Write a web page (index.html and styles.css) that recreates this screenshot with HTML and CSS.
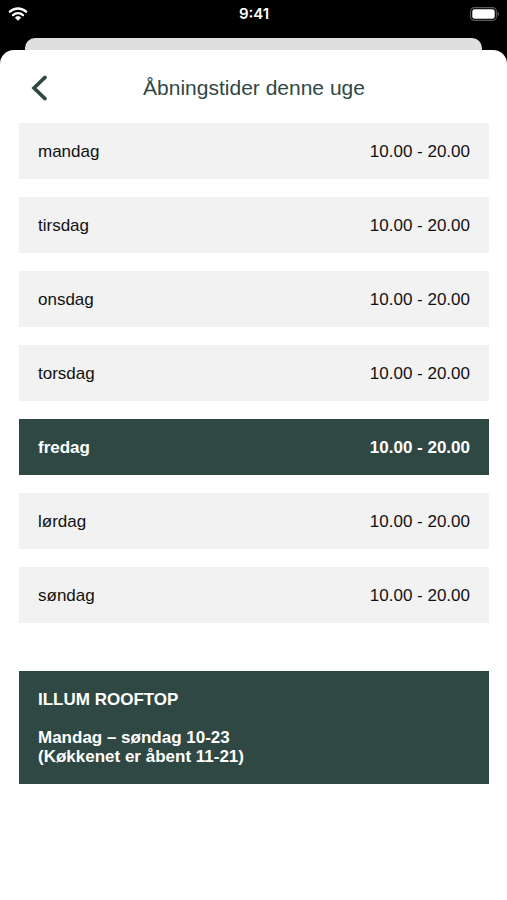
FILE: index.html
```html
<!DOCTYPE html>
<html lang="da">
<head>
<meta charset="utf-8">
<meta name="viewport" content="width=device-width, initial-scale=1">
<title>Åbningstider denne uge</title>
<link rel="stylesheet" href="styles.css">
</head>
<body>
<div class="status">
  <svg class="wifi" width="20" height="14" viewBox="0 0 20 14" aria-hidden="true">
    <path d="M1.9 4.7a11.8 11.8 0 0 1 16.2 0M5 8.1a7.3 7.3 0 0 1 10 0" fill="none" stroke="#fff" stroke-width="2.3" stroke-linecap="round"/>
    <path d="M10 13.4 7.4 11q-.3-.5.2-.8a4 4 0 0 1 4.8 0q.5.3.2.8z" fill="#fff" stroke="#fff" stroke-width=".5" stroke-linejoin="round"/>
  </svg>
  <time class="clock">9:41</time>
  <svg class="battery" width="30" height="14" viewBox="0 0 30 14" aria-hidden="true">
    <rect x=".6" y=".6" width="25.8" height="12.8" rx="3.8" fill="none" stroke="#5c5c5c" stroke-width="1.1"/>
    <rect x="2.3" y="2.2" width="22.4" height="9.6" rx="2.2" fill="#fff"/>
    <path d="M27.7 4.8a2.4 2.4 0 0 1 0 4.4z" fill="#5c5c5c"/>
  </svg>
</div>
<div class="behind"></div>
<main class="sheet">
  <header class="header">
    <button class="back" type="button" aria-label="Tilbage">
      <svg width="18" height="26" viewBox="0 0 18 26" aria-hidden="true"><path d="M15 2.4 4 13l11 10.6" fill="none" stroke="#2f4843" stroke-width="3.6" stroke-linecap="round"/></svg>
    </button>
    <h1 class="title">Åbningstider denne uge</h1>
  </header>
  <ul class="days">
    <li class="day"><span>mandag</span><span>10.00 - 20.00</span></li>
    <li class="day"><span>tirsdag</span><span>10.00 - 20.00</span></li>
    <li class="day"><span>onsdag</span><span>10.00 - 20.00</span></li>
    <li class="day"><span>torsdag</span><span>10.00 - 20.00</span></li>
    <li class="day today"><span>fredag</span><span>10.00 - 20.00</span></li>
    <li class="day"><span>lørdag</span><span>10.00 - 20.00</span></li>
    <li class="day"><span>søndag</span><span>10.00 - 20.00</span></li>
  </ul>
  <section class="note">
    <h2 class="note-title">ILLUM ROOFTOP</h2>
    <p class="note-text">Mandag – søndag 10-23<br>(Køkkenet er åbent 11-21)</p>
  </section>
</main>
</body>
</html>
```
FILE: styles.css
```css
* { box-sizing: border-box; }
body {
  margin: 0;
  min-height: 100vh;
  display: flex;
  flex-direction: column;
  background: #000;
  color: #111;
  font: 17px/20px "Liberation Sans", Arial, sans-serif;
}
h1, h2, p, ul { margin: 0; padding: 0; }
.status {
  display: grid;
  grid-template-columns: 1fr auto 1fr;
  align-items: center;
  height: 38px;
  padding: 0 7px 11px 8px;
  color: #fff;
}
.clock { font: 600 15px/20px Inter, sans-serif; }
.battery { justify-self: end; }
.behind {
  height: 12px;
  margin: 0 25px;
  border-radius: 10px 10px 0 0;
  background: #dfdfdf;
}
.sheet {
  flex: 1;
  padding: 0 18px 24px 19px;
  border-radius: 14px 14px 0 0;
  background: #fff;
}
.header {
  display: grid;
  grid-template-columns: 40px 1fr 40px;
  align-items: center;
  height: 73px;
  padding-top: 3px;
}
.back {
  display: flex;
  justify-content: center;
  padding: 0;
  border: 0;
  background: none;
}
.title {
  color: #2f4843;
  font-size: 21px;
  font-weight: 400;
  line-height: 24px;
  text-align: center;
}
.days {
  display: grid;
  gap: 18px;
  list-style: none;
}
.day {
  display: flex;
  align-items: center;
  justify-content: space-between;
  height: 56px;
  padding: 2px 19px 0;
  background: #f2f2f2;
}
.today {
  background: #2f4843;
  color: #fff;
  font-weight: 700;
}
.note {
  margin-top: 48px;
  padding: 19px 19px 18px;
  background: #2f4843;
  color: #fff;
  font-weight: 700;
  line-height: 19px;
}
.note-title {
  margin-bottom: 19px;
  font-size: 17px;
}
```
